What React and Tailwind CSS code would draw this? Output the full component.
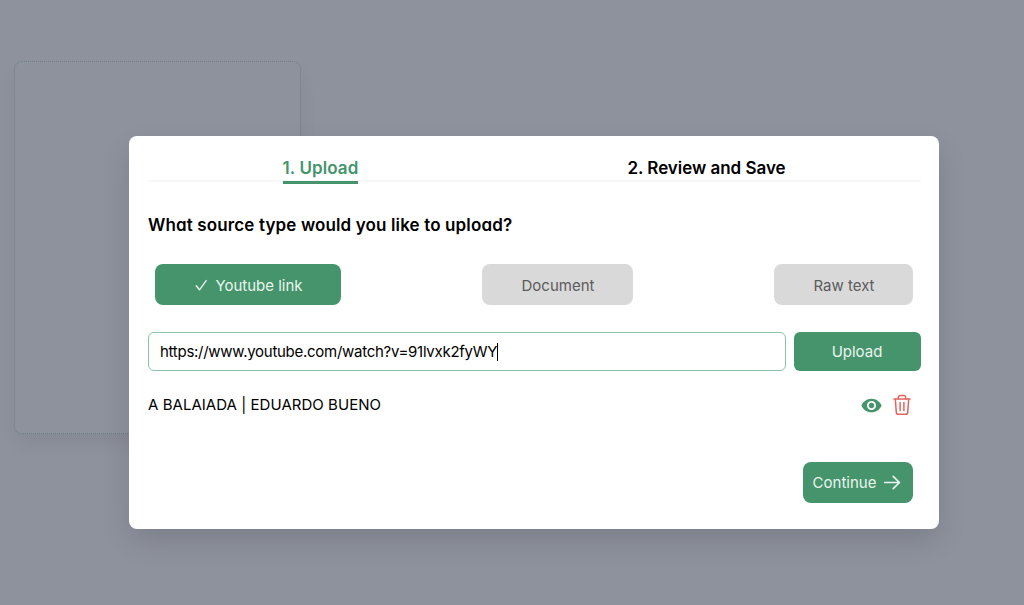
import { useState } from 'react';
import { IoMdEye } from 'react-icons/io';

const sourceTypes = [
    { id: 'youtube', label: 'Youtube link', width: 'w-[186px]' },
    { id: 'document', label: 'Document', width: 'w-[151px]' },
    { id: 'text', label: 'Raw text', width: 'w-[139px]' },
];

function CheckIcon() {
    return (
        <svg viewBox="0 0 14 14" className="size-[14px]" fill="none" stroke="currentColor" strokeWidth="1.4" strokeLinecap="round" strokeLinejoin="round">
            <path d="M2.2 6.8 5.5 10.8 12.2 1.6" />
        </svg>
    );
}

function ArrowIcon() {
    return (
        <svg viewBox="0 0 18 18" className="size-[18px]" fill="none" stroke="currentColor" strokeWidth="1.7" strokeLinecap="round" strokeLinejoin="round">
            <path d="M1.8 8.5h14.6M10.2 2.4 16.4 8.5l-6.2 6.1" />
        </svg>
    );
}

function TrashIcon() {
    return (
        <svg viewBox="0 0 20 22" className="h-[22px] w-5" fill="none" stroke="currentColor" strokeWidth="1.5" strokeLinecap="round" strokeLinejoin="round">
            <path d="M2 5h16M3.3 5l1 13.4a2 2 0 0 0 2 1.9h7.4a2 2 0 0 0 2-1.9L16.7 5" />
            <path d="M6.3 5V3.6A2.2 2.2 0 0 1 8.5 1.4h3a2.2 2.2 0 0 1 2.2 2.2V5" />
            <path d="M8.1 8.6v7.8M11.9 8.6v7.8" />
        </svg>
    );
}

export default function App() {
    const [sourceType, setSourceType] = useState('youtube');
    const [sources, setSources] = useState([{ id: 1, title: 'A BALAIADA | EDUARDO BUENO' }]);

    const removeSource = (id) => {
        setSources(sources.filter((source) => source.id !== id));
    };

    return (
        <div className="relative h-[605px] overflow-hidden bg-[#8e929d] font-['Inter',sans-serif] text-black">
            <div className="pt-[61px] pl-[14px]">
                <div className="h-[373px] w-[287px] rounded-lg border border-dotted border-[#6c7d84] shadow-[0_10px_20px_-3px_rgba(0,0,0,0.07)]" />
            </div>

            {/* Upload modal */}
            <div className="absolute top-[136px] left-[129px] h-[393px] w-[810px] rounded-lg bg-white pr-[18px] pl-[19px] shadow-[0_12px_30px_-2px_rgba(0,0,0,0.14)]">
                <div className="flex h-[46px] border-b-2 border-[#f7f7f8] pt-[19px] text-[17px] leading-[26px] font-semibold">
                    <div className="flex flex-1 justify-center pr-[41px]">
                        <span className="h-[29px] border-b-[3px] border-[#45946c] tracking-[0.09px] text-[#45946c]">1. Upload</span>
                    </div>
                    <div className="flex flex-1 justify-center pr-[42px]">
                        <span className="tracking-[-0.03px]">2. Review and Save</span>
                    </div>
                </div>

                <h2 className="mt-[30px] text-[17px] leading-[26px] font-semibold tracking-[0.13px] [font-feature-settings:'cv11']">
                    What source type would you like to upload?
                </h2>

                {/* Source type */}
                <div className="mt-[26px] flex justify-between pr-2 pl-[7px]">
                    {sourceTypes.map(({ id, label, width }) => (
                        <button
                            key={id}
                            onClick={() => setSourceType(id)}
                            className={`flex h-[41px] items-center justify-center gap-[7px] rounded-lg pt-[3px] pl-px text-[15px] ${width} ${
                                sourceType === id ? 'bg-[#45946c] text-[#eaf4ee]' : 'bg-[#d9d9d9] text-[#5c5c5c]'
                            }`}
                        >
                            {sourceType === id && <CheckIcon />}
                            {label}
                        </button>
                    ))}
                </div>

                <div className="mt-[27px] flex gap-2">
                    <div className="flex h-[39px] flex-1 items-center rounded-md border border-[#8cc3a7] pt-px pl-[11px] text-[15px]">
                        <span className="tracking-[-0.28px]">https://www.youtube.com/watch?v=91lvxk2fyWY</span>
                        <span className="h-[18px] w-px bg-black" />
                    </div>
                    <button className="h-[39px] w-[127px] rounded-md bg-[#45946c] pt-px pr-px text-[15px] text-[#eaf4ee]">
                        Upload
                    </button>
                </div>

                {/* Uploaded sources */}
                {sources.map((source) => (
                    <div key={source.id} className="mt-[22px] flex h-6 items-center pr-[9px] text-[15px]">
                        <p className="flex-1 tracking-[0.04px]">{source.title}</p>
                        <button className="mr-[9px] text-[#45946c]">
                            <IoMdEye className="size-[23px]" />
                        </button>
                        <button onClick={() => removeSource(source.id)} className="text-[#e2645f]">
                            <TrashIcon />
                        </button>
                    </div>
                ))}

                <div className="mt-[45px] flex justify-end pr-2">
                    <button className="flex h-[41px] w-[110px] items-center justify-center gap-[7px] rounded-lg bg-[#45946c] pt-px pr-[2px] text-[15px] text-[#eaf4ee]">
                        Continue
                        <ArrowIcon />
                    </button>
                </div>
            </div>
        </div>
    );
}
